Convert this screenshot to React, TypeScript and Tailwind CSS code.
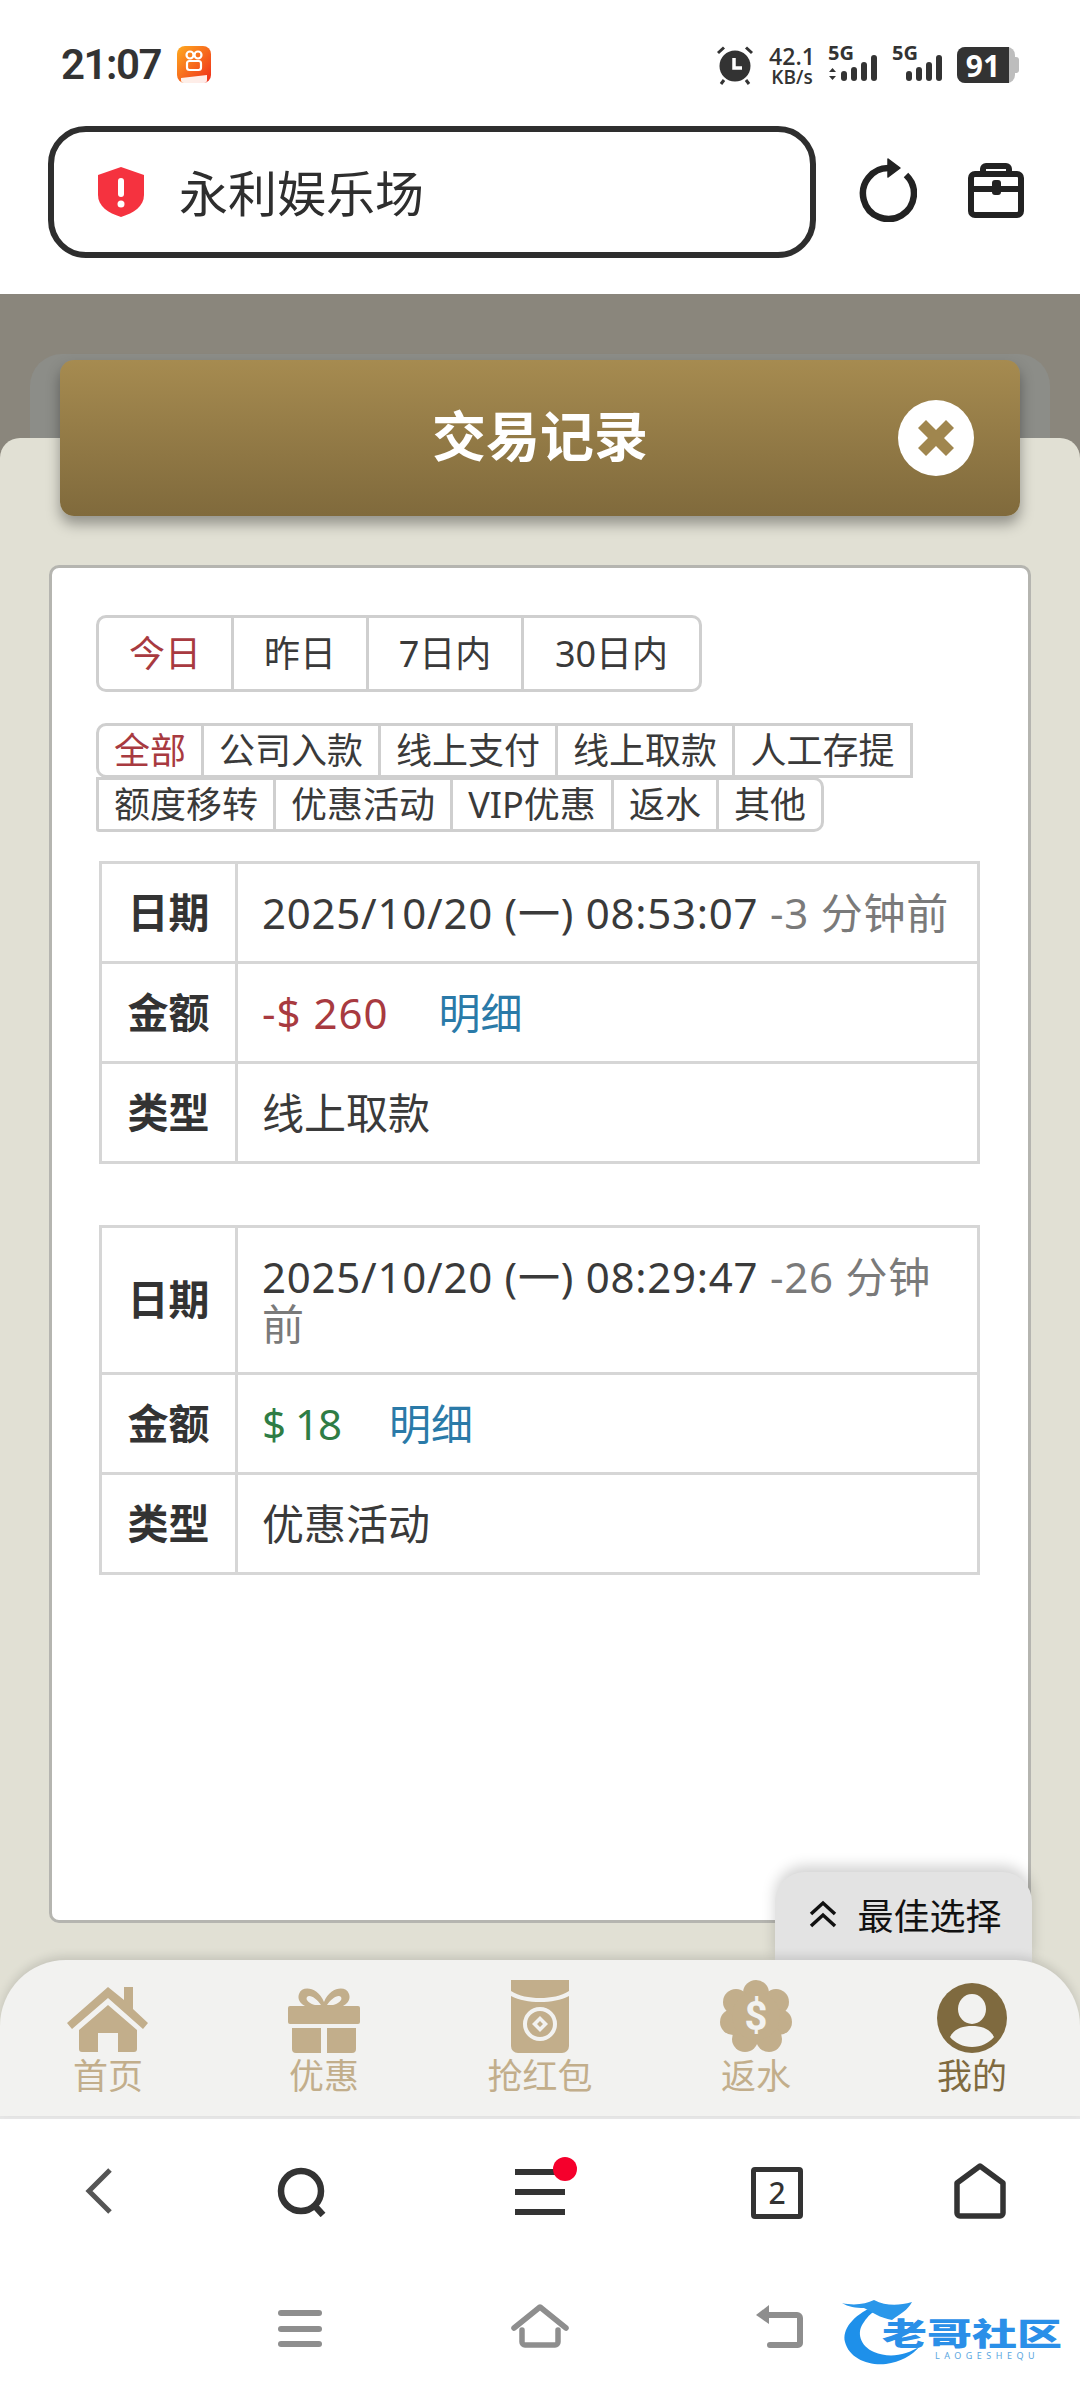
import React from 'react'

const font = { fontFamily: '"Noto Sans", "Noto Sans CJK SC", sans-serif' }
const statusFont = { fontFamily: '"Open Sans", sans-serif' }

const periodTabs = [
  { label: '今日', w: 'w-[132px]', active: true },
  { label: '昨日', w: 'w-[135px]' },
  { label: '7日内', w: 'w-[155px]' },
  { label: '30日内', w: 'w-[178px]' },
]

const filterRow1 = [
  { label: '全部', w: 'w-[108px]', active: true, cls: 'rounded-tl-[10px] rounded-bl-[10px]' },
  { label: '公司入款', w: 'w-[180px]' },
  { label: '线上支付', w: 'w-[180px]' },
  { label: '线上取款', w: 'w-[180px]' },
  { label: '人工存提', w: 'w-[181px]' },
]

const filterRow2 = [
  { label: '额度移转', w: 'w-[180px]', cls: 'rounded-bl-[3px]' },
  { label: '优惠活动', w: 'w-[180px]' },
  { label: 'VIP优惠', w: 'w-[164px]' },
  { label: '返水', w: 'w-[108px]' },
  { label: '其他', w: 'w-[108px]', cls: 'rounded-tr-[10px] rounded-br-[10px]' },
]

function FilterRow({ items, className }: { items: { label: string; w: string; active?: boolean; cls?: string }[]; className?: string }) {
  return (
    <div className={'flex h-[55px] ' + (className || '')}>
      {items.map((t, i) => (
        <div
          key={t.label}
          className={`${t.w} ${i === 0 ? '' : '-ml-[3px]'} ${t.cls || ''} flex items-center justify-center border-[3px] border-[#cfcfcf] bg-white text-[36px] ${t.active ? 'text-[#a83a40]' : 'text-[#3a3a3a]'}`}
        >
          {t.label}
        </div>
      ))}
    </div>
  )
}

function RecordTable({ rows, className }: { rows: { k: string; v: React.ReactNode; h: string }[]; className?: string }) {
  return (
    <table className={'w-[881px] ml-[47px] border-collapse table-fixed text-[42px] text-[#3a3a3a] ' + (className || '')}>
      <tbody>
        {rows.map(r => (
          <tr key={r.k} className={r.h}>
            <th className="w-[136px] border-[3px] border-[#d6d6d6] text-center font-bold text-[41px] text-[#333]">{r.k}</th>
            <td className="border-[3px] border-[#d6d6d6] pl-[24px] pr-[24px] leading-[47px]">{r.v}</td>
          </tr>
        ))}
      </tbody>
    </table>
  )
}

function StatusBar() {
  return (
    <div className="flex h-[126px] items-start px-[61px] pt-[40px] text-[#333]">
      <span className="text-[42px] leading-[50px] font-semibold tracking-[-1.500px]" style={{ fontFamily: 'Roboto, sans-serif' }}>21:07</span>
      <svg className="ml-[15px] mt-[6px]" width="36" height="37" viewBox="0 0 36 37">
        <defs>
          <linearGradient id="appicon" x1="0" y1="0" x2="1" y2="1">
            <stop offset="0" stopColor="#ffab1f" />
            <stop offset="1" stopColor="#ee2a1b" />
          </linearGradient>
        </defs>
        <rect x="1" width="34" height="37" rx="8" fill="url(#appicon)" />
        <circle cx="14" cy="9" r="3.500" fill="none" stroke="#fff" strokeWidth="2.200" />
        <circle cx="22" cy="9" r="3.500" fill="none" stroke="#fff" strokeWidth="2.200" />
        <rect x="11" y="15" width="14" height="9" rx="2.500" fill="none" stroke="#fff" strokeWidth="2.200" />
        <path d="M5 32l26-3v5a3 3 0 0 1-3 3H8a3 3 0 0 1-3-3z" fill="#fff" opacity=".9" />
      </svg>
      <div className="ml-auto flex items-start">
        <svg width="40" height="40" viewBox="0 0 40 40" className="mt-[5px] -ml-[2px]">
          <circle cx="20" cy="21" r="15.500" fill="#333" />
          <path d="M3 8 9 2.500M37 8 31 2.500M9 35l-3 4M31 35l3 4" stroke="#333" strokeWidth="3" />
          <path d="M19 13v10h8" fill="none" stroke="#fff" strokeWidth="3.500" />
        </svg>
        <div className="ml-[13px] mt-[4px] flex w-[48px] flex-col items-center font-semibold" style={statusFont}>
          <span className="text-[23px] leading-[24px]">42.1</span>
          <span className="text-[19px] leading-[18px] whitespace-nowrap">KB/s</span>
        </div>
        <div className="relative ml-[12px] mt-[2px] h-[44px] w-[54px]">
          <span className="absolute left-0 top-0 text-[20px] leading-[22px] font-bold" style={statusFont}>5G</span>
          <svg width="54" height="44" viewBox="0 0 54 44" className="absolute left-0 top-0">
            <path d="M1 30l3.500-4 3.500 4zM1 34l3.500 4 3.500-4z" fill="#333" />
            <rect x="13" y="29" width="6" height="10" rx="3" fill="#333" />
            <rect x="23" y="25" width="6" height="14" rx="3" fill="#333" />
            <rect x="33" y="20" width="6" height="19" rx="3" fill="#333" />
            <rect x="43" y="13" width="6" height="26" rx="3" fill="#333" />
          </svg>
        </div>
        <div className="relative ml-[10px] mt-[2px] h-[44px] w-[54px]">
          <span className="absolute left-0 top-0 text-[20px] leading-[22px] font-bold" style={statusFont}>5G</span>
          <svg width="54" height="44" viewBox="0 0 54 44" className="absolute left-0 top-0">
            <rect x="14" y="29" width="6" height="10" rx="3" fill="#333" />
            <rect x="24" y="25" width="6" height="14" rx="3" fill="#333" />
            <rect x="34" y="20" width="6" height="19" rx="3" fill="#333" />
            <rect x="44" y="13" width="6" height="26" rx="3" fill="#333" />
          </svg>
        </div>
        <div className="ml-[11px] mt-[7px] flex h-[36px] w-[58px] items-center rounded-[8px] bg-[#bdbdbd]">
          <div className="flex h-full w-[52px] items-center justify-center rounded-l-[8px] bg-[#333] text-[30px] font-bold text-white" style={statusFont}>91</div>
        </div>
        <div className="mt-[17px] h-[16px] w-[4px] rounded-r-[3px] bg-[#bdbdbd]" />
      </div>
    </div>
  )
}

function UrlBar() {
  return (
    <div className="flex h-[168px] items-start bg-white pl-[48px]">
      <div className="flex h-[132px] w-[768px] items-center rounded-[38px] border-[6px] border-[#2e2e2e] pl-[42px]">
        <svg width="50" height="52" viewBox="0 0 50 52">
          <path d="M25 1 48 9v20c0 11-10 18-23 22C12 47 2 40 2 29V9z" fill="#f5323f" />
          <rect x="22" y="12" width="6" height="19" rx="3" fill="#fff" />
          <circle cx="25" cy="38" r="3.500" fill="#fff" />
        </svg>
        <span className="ml-[33px] pt-[2px] text-[49px] leading-none text-[#2e2e2e]">永利娱乐场</span>
      </div>
      <svg className="ml-[43px] mt-[32px]" width="58" height="64" viewBox="0 0 58 64" fill="none">
        <path d="M47 17A25.500 25.500 0 1 1 30 10" stroke="#222" strokeWidth="6.500" />
        <path d="M29 1l12 9-12 9z" fill="#222" stroke="#222" strokeWidth="1.500" strokeLinejoin="round" />
      </svg>
      <svg className="ml-[50px] mt-[37px]" width="58" height="56" viewBox="0 0 58 56" fill="none" stroke="#222" strokeWidth="6">
        <rect x="4" y="11" width="50" height="41" rx="4" />
        <path d="M16 11V6a3 3 0 0 1 3-3h20a3 3 0 0 1 3 3v5M3 26h52" />
        <rect x="25" y="17" width="9" height="15" rx="3" fill="#222" stroke="none" />
      </svg>
    </div>
  )
}

function BottomTabs() {
  const active = '#7f6a3f'
  const c = '#c2ae8b'
  const tabs = [
    {
      label: '首页',
      icon: (
        <svg width="84" height="66" viewBox="0 0 84 66">
          <path d="M42 0l16 13V0h9v22l15 14-5 6L42 11 6 42l-5-6z" fill={c} />
          <path d="M42 18 71 43v19a3 3 0 0 1-3 3H52V46H32v19H16a3 3 0 0 1-3-3V43z" fill={c} />
        </svg>
      ),
    },
    {
      label: '优惠',
      icon: (
        <svg width="72" height="66" viewBox="0 0 72 66">
          <path d="M36 15C30 0 14-2 11 7c-2 6 2 10 6 12h38c4-2 8-6 6-12-3-9-19-7-25 8z" fill={c} />
          <path d="M33 18c-4-6-11-11-14-8-2 3 3 7 8 8zM39 18c4-6 11-11 14-8 2 3-3 7-8 8z" fill="#f2f2f0" />
          <rect y="19" width="72" height="18" rx="2" fill={c} />
          <path d="M4 41h29v25H8a4 4 0 0 1-4-4zM39 41h29v21a4 4 0 0 1-4 4H39z" fill={c} />
        </svg>
      ),
    },
    {
      label: '抢红包',
      icon: (
        <svg width="58" height="73" viewBox="0 0 58 73">
          <path d="M0 0h58v11c-8 5-18 7-29 7S8 16 0 11z" fill={c} />
          <path d="M0 16c8 4 18 6 29 6s21-2 29-6v50a7 7 0 0 1-7 7H7a7 7 0 0 1-7-7z" fill={c} />
          <circle cx="29" cy="44" r="15" fill="none" stroke="#f2f2f0" strokeWidth="4" />
          <path d="M29 36l8 8-8 8-8-8zm0 5-3 3 3 3 3-3z" fill="#f2f2f0" fillRule="evenodd" />
        </svg>
      ),
    },
    {
      label: '返水',
      icon: (
        <svg width="72" height="73" viewBox="0 0 72 73">
          <g fill={c}>
            <circle cx="36" cy="13" r="13" />
            <circle cx="56" cy="22" r="13" />
            <circle cx="59" cy="42" r="13" />
            <circle cx="49" cy="59" r="13" />
            <circle cx="25" cy="59" r="13" />
            <circle cx="13" cy="42" r="13" />
            <circle cx="16" cy="22" r="13" />
            <circle cx="36" cy="36" r="24" />
          </g>
          <text x="36" y="50" textAnchor="middle" fontSize="40" fontWeight="700" fill="#f2f2f0" fontFamily="Roboto, sans-serif">$</text>
        </svg>
      ),
    },
    {
      label: '我的',
      icon: (
        <svg width="70" height="70" viewBox="0 0 70 70">
          <circle cx="35" cy="35" r="35" fill={active} />
          <ellipse cx="35" cy="26" rx="14" ry="15" fill="#f2f2f0" />
          <path d="M13 54c4-8 12-11 22-11s18 3 22 11c-5 6-13 10-22 10s-17-4-22-10z" fill="#f2f2f0" />
        </svg>
      ),
    },
  ]
  return (
    <div className="relative mt-auto grid h-[156px] grid-cols-5 rounded-t-[66px] bg-[#f2f2f0] shadow-[0_-4px_10px_rgba(0,0,0,0.12)]">
      {tabs.map((t, i) => (
        <div key={t.label} className="flex flex-col items-center">
          <div className="flex h-[98px] items-end pb-[5px]">{t.icon}</div>
          <span className={`text-[35px] leading-[36px] ${i === 4 ? 'text-[#7f6a3f]' : 'text-[#c2ae8b]'}`}>{t.label}</span>
        </div>
      ))}
    </div>
  )
}

function Toolbar() {
  return (
    <div className="flex h-[140px] items-start border-t-[3px] border-[#e8e8e8] bg-white pt-[48px]">
      <svg className="ml-[84px]" width="30" height="48" viewBox="0 0 30 48" fill="none" stroke="#555" strokeWidth="5">
        <path d="M26 3 5 24l21 21" />
      </svg>
      <svg className="ml-[162px]" width="54" height="50" viewBox="0 0 54 50" fill="none" stroke="#333" strokeWidth="6.500">
        <circle cx="25" cy="24" r="20" />
        <path d="M38 38l9 10" />
      </svg>
      <div className="relative ml-[185px] mt-[2px] flex h-[46px] w-[50px] flex-col justify-between">
        <div className="h-[6px] bg-[#333]" />
        <div className="h-[6px] bg-[#333]" />
        <div className="h-[6px] bg-[#333]" />
        <div className="absolute -right-[12px] -top-[12px] h-[24px] w-[24px] rounded-full bg-[#f5002c]" />
      </div>
      <div className="ml-[186px] flex h-[52px] w-[52px] items-center justify-center rounded-[4px] border-[5px] border-[#333] text-[30px] leading-none font-medium text-[#333]">2</div>
      <svg className="ml-[151px] -mt-[4px]" width="52" height="56" viewBox="0 0 52 56" fill="none" stroke="#333" strokeWidth="5.500" strokeLinejoin="round">
        <path d="M26 3 49 20v30a3 3 0 0 1-3 3H6a3 3 0 0 1-3-3V20z" />
      </svg>
    </div>
  )
}

function SystemNav() {
  return (
    <div className="relative flex flex-1 items-start bg-white pt-[48px]">
      <div className="ml-[278px] mt-[6px] flex h-[37px] w-[44px] flex-col justify-between">
        <div className="h-[6px] rounded-[3px] bg-[#8e8e8e]" />
        <div className="h-[6px] rounded-[3px] bg-[#8e8e8e]" />
        <div className="h-[6px] rounded-[3px] bg-[#8e8e8e]" />
      </div>
      <svg className="ml-[189px]" width="58" height="44" viewBox="0 0 58 44" fill="none" stroke="#8e8e8e" strokeWidth="5.500" strokeLinecap="round" strokeLinejoin="round">
        <path d="M3 24 29 3l26 21" />
        <path d="M11 26v12a3 3 0 0 0 3 3h30a3 3 0 0 0 3-3V26" />
      </svg>
      <svg className="ml-[186px]" width="48" height="44" viewBox="0 0 48 44" fill="none">
        <path d="M14 11h28a3 3 0 0 1 3 3v25a2 2 0 0 1-2 2H15" stroke="#8e8e8e" strokeWidth="6" strokeLinecap="round" />
        <path d="M14 1v19L1 11z" fill="#8e8e8e" />
      </svg>
      {/* watermark over the nav bar */}
      <div className="absolute left-[842px] top-[42px] h-[72px] w-[222px]">
        <svg className="absolute left-0 top-0" width="110" height="72" viewBox="0 0 110 72">
          <path d="M32 8C10 18 0 32 3 44c4 16 23 24 41 22 14-2 26-8 34-18-14 10-32 12-46 6-14-6-18-20-10-30 4-6 8-10 14-12z" fill="#1e90ea" />
          <path d="M0 5c12 3 24 1 32-3 12 6 24 6 38 2-4 8-12 12-20 18-12-2-20-8-28-12C14 10 6 9 0 5z" fill="#2a97ea" />
        </svg>
        <span className="absolute left-[40px] top-[13px] origin-center scale-y-[0.68] text-[45px] leading-[44px] font-black whitespace-nowrap text-[#2a8fe8]">老哥社区</span>
        <span className="absolute left-[93px] top-[52px] text-[9px] leading-[12px] tracking-[4.500px] text-[#5aa6e0]">LAOGESHEQU</span>
      </div>
    </div>
  )
}

export default function App() {
  return (
    <div className="flex h-[2392px] w-[1080px] flex-col overflow-hidden bg-white" style={font}>
      <StatusBar />
      <UrlBar />

      {/* dimmed page behind the modal */}
      <div className="flex h-[1822px] flex-col bg-[#8a867c] pt-[60px]">
        <div className="mx-[30px] h-[84px] shrink-0 rounded-t-[32px] bg-[#8c8d88]" />

        <div className="relative flex flex-1 flex-col rounded-t-[20px] bg-[#e1e0d4]">
          <div className="relative mx-[60px] -mt-[78px] flex h-[156px] shrink-0 items-center justify-center rounded-[14px] bg-gradient-to-b from-[#a68b50] to-[#806a3c] pb-[4px] shadow-[0_8px_14px_rgba(0,0,0,0.35)]">
            <span className="text-[54px] font-bold text-white">交易记录</span>
            <div className="absolute right-[46px] top-[40px] flex h-[76px] w-[76px] items-center justify-center rounded-full bg-white">
              <svg width="40" height="40" viewBox="0 0 40 40">
                <path d="M2 10 10 2 20 12 30 2l8 8-10 10 10 10-8 8-10-10-10 10-8-8 10-10z" fill="#a0864e" />
              </svg>
            </div>
          </div>

          <div className="mx-[49px] mt-[49px] h-[1358px] shrink-0 rounded-[10px] border-[3px] border-[#b5b5b0] bg-white">
            <div className="ml-[44px] mt-[47px] flex h-[77px] w-fit rounded-[10px] border-[3px] border-[#cfcfcf] text-[36px] text-[#3a3a3a]">
              {periodTabs.map((t, i) => (
                <div
                  key={t.label}
                  className={`${t.w} flex items-center justify-center ${i > 0 ? 'border-l-[3px] border-[#cfcfcf]' : ''} ${t.active ? 'text-[#a83a40]' : ''}`}
                >
                  {t.label}
                </div>
              ))}
            </div>

            <div className="ml-[44px] mt-[31px]">
              <FilterRow items={filterRow1} />
              <FilterRow items={filterRow2} className="-mt-[1px]" />
            </div>

            <RecordTable
              className="mt-[29px]"
              rows={[
                {
                  k: '日期',
                  h: 'h-[100px]',
                  v: (
                    <span className="tracking-[0.75px]">
                      2025/10/20 (一) 08:53:07 <span className="text-[#7a7a7a]">-3 分钟前</span>
                    </span>
                  ),
                },
                {
                  k: '金额',
                  h: 'h-[100px]',
                  v: (
                    <>
                      <span className="tracking-[1px] text-[#a83a40]">-$ 260</span>
                      <span className="ml-[50px] text-[#2a7aa8]">明细</span>
                    </>
                  ),
                },
                { k: '类型', h: 'h-[100px]', v: '线上取款' },
              ]}
            />

            <RecordTable
              className="mt-[61px]"
              rows={[
                {
                  k: '日期',
                  h: 'h-[147px]',
                  v: (
                    <span className="tracking-[0.75px]">
                      2025/10/20 (一) 08:29:47 <span className="text-[#7a7a7a]">-26 分钟前</span>
                    </span>
                  ),
                },
                {
                  k: '金额',
                  h: 'h-[100px]',
                  v: (
                    <>
                      <span className="tracking-[-1px] text-[#2f7d45]">$ 18</span>
                      <span className="ml-[48px] text-[#2a7aa8]">明细</span>
                    </>
                  ),
                },
                { k: '类型', h: 'h-[100px]', v: '优惠活动' },
              ]}
            />
          </div>

          {/* floating jump button */}
          <div className="absolute left-[775px] top-[1434px] flex h-[90px] w-[257px] items-start justify-center rounded-t-[30px] bg-[#e3e3e3] pt-[20px] shadow-[0_-6px_14px_rgba(0,0,0,0.18)]">
            <svg className="ml-[3px] mt-[8px]" width="30" height="28" viewBox="0 0 30 28" fill="none" stroke="#111" strokeWidth="3.500">
              <path d="M3 14 15 3l12 11M3 26 15 15l12 11" />
            </svg>
            <span className="ml-[19px] mt-[1px] text-[36px] leading-[48px] text-[#111]">最佳选择</span>
          </div>

          <BottomTabs />
        </div>
      </div>

      <Toolbar />
      <SystemNav />
    </div>
  )
}
